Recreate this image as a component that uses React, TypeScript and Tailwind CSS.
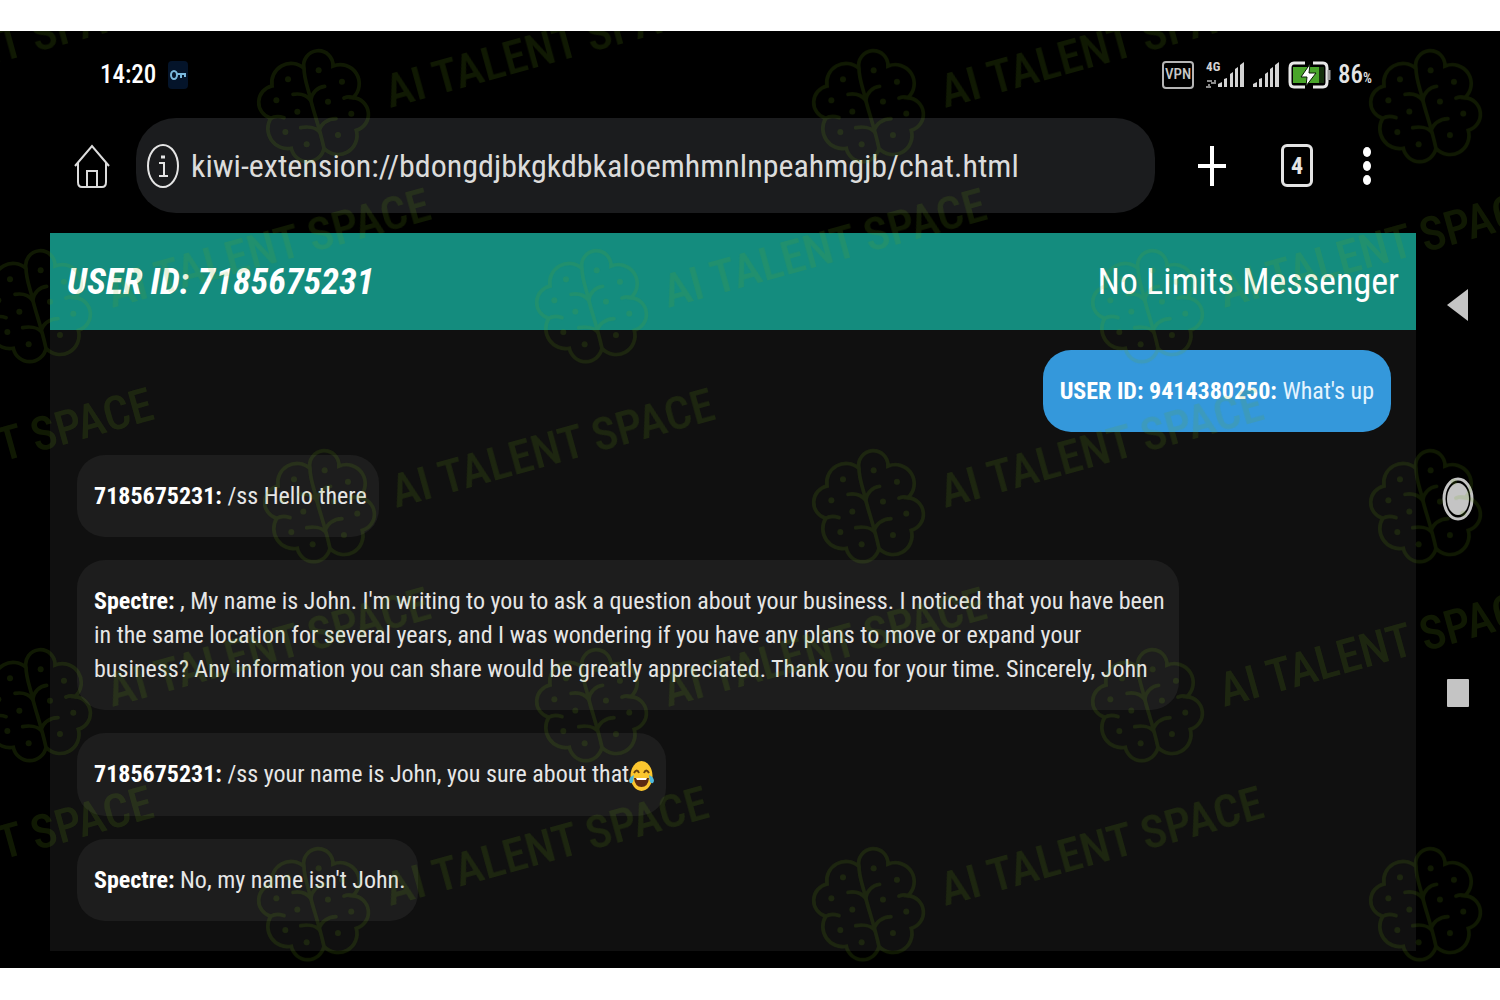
import React from 'react';

type Message = {
  id: number;
  author: string;
  text: string;
  own?: boolean;
  laughing?: boolean;
};

const messages: Message[] = [
  { id: 1, author: 'USER ID: 9414380250:', text: "What's up", own: true },
  { id: 2, author: '7185675231:', text: '/ss Hello there' },
  {
    id: 3,
    author: 'Spectre:',
    text: ", My name is John. I'm writing to you to ask a question about your business. I noticed that you have been in the same location for several years, and I was wondering if you have any plans to move or expand your business? Any information you can share would be greatly appreciated. Thank you for your time. Sincerely, John",
  },
  {
    id: 4,
    author: '7185675231:',
    text: '/ss your name is John, you sure about that',
    laughing: true,
  },
  { id: 5, author: 'Spectre:', text: "No, my name isn't John." },
];

// Centres of the repeated brand marks
const marks = [
  [-242, 76], [313, 76], [868, 76], [1425, 76],
  [35, 276], [591, 276], [1147, 276],
  [-242, 476], [319, 476], [868, 476], [1425, 476],
  [35, 675], [591, 675], [1147, 675],
  [-242, 874], [313, 874], [868, 874], [1425, 874],
];

const dots = [
  [130, 145], [222, 118], [292, 152], [95, 208], [250, 212],
  [158, 242], [320, 248], [122, 303], [280, 312], [186, 340],
];

const Watermark = () => (
  <svg
    className="pointer-events-none absolute inset-0 h-full w-full overflow-hidden"
    aria-hidden="true"
  >
    <defs>
      <g id="brain" fill="none" stroke="#6eaa14" strokeWidth="11" strokeLinecap="round">
        <path d="M178 112A58 58 0 0 0 82 165A50 50 0 0 0 78 262A60 60 0 0 0 140 352A50 50 0 0 0 238 352A57 57 0 0 0 335 298A50 50 0 0 0 325 200A57 57 0 0 0 265 105A44 44 0 1 0 178 112C178 145 190 170 198 205C207 245 222 280 238 352" />
        <path d="M145 190C165 187 185 190 198 208C202 185 218 168 240 166M168 290C190 286 212 290 222 300C230 280 248 264 274 263M78 262C88 256 103 255 118 260M298 201C308 197 318 197 325 200" />
        {dots.map(([x, y]) => (
          <circle key={`${x}-${y}`} cx={x} cy={y} r="9" fill="#6eaa14" stroke="none" />
        ))}
      </g>
    </defs>
    <g opacity="0.15">
      {marks.map(([x, y]) => (
        <g key={`${x}-${y}`} transform={`translate(${x} ${y})`}>
          <use href="#brain" transform="scale(0.333) translate(-205 -228)" />
          <text
            transform="translate(77 1) rotate(-15.5)"
            fill="#6eaa14"
            className="font-['Roboto_Condensed',Roboto,sans-serif] text-[47px] font-medium"
          >
            AI TALENT SPACE
          </text>
        </g>
      ))}
    </g>
  </svg>
);

const Signal = () => (
  <svg width="27" height="26" viewBox="0 0 27 26" fill="#d4d4d4" aria-hidden="true">
    <path d="M0 25V22L4 20V25ZM6 25V17L9 16V25ZM12 25V12L15 10V25ZM17 25V7L20 5V25ZM22 25V3L26 0V25Z" />
  </svg>
);

const StatusBar = () => (
  <div className="flex h-[87px] items-center pr-11 pl-[50px] text-white">
    <time className="text-[25px] font-medium">14:20</time>
    <span className="ml-3 flex h-7 w-5 items-center justify-center rounded bg-[#04142a]">
      <svg width="16" height="12" viewBox="0 0 16 12" fill="none" stroke="#7ab8dc" aria-hidden="true">
        <ellipse cx="4" cy="6" rx="3" ry="4" strokeWidth="2" />
        <path d="M7 5H15V8M11 5V9" strokeWidth="2" />
      </svg>
    </span>
    <div className="ml-auto flex items-center">
      <span className="flex h-7 w-8 items-center justify-center rounded-sm border-2 border-[#b5b5b5] text-[15px] font-medium text-[#c8c8c8]">
        VPN
      </span>
      <span className="ml-3 flex h-7 w-4 flex-col justify-between text-[13px] leading-3 font-bold text-[#d4d4d4]">
        4G
        <svg width="10" height="10" viewBox="0 0 10 10" fill="none" stroke="#8a8a8a" strokeWidth="2" aria-hidden="true">
          <path d="M1 2H6M0 8H5M5 4H9V1M3 8V5" />
        </svg>
      </span>
      <span className="-ml-1">
        <Signal />
      </span>
      <span className="ml-2">
        <Signal />
      </span>
      <svg className="ml-2" width="46" height="28" viewBox="0 0 46 28" fill="none" aria-label="Charging" role="img">
        <path d="M17 2H6Q2 2 2 7V21Q2 26 6 26H17M25 2H35Q39 2 39 7V21Q39 26 35 26H25" stroke="#e8e8e8" strokeWidth="3" />
        <path d="M5 6H31V22H5Z" fill="#49a52a" />
        <path d="M31 6H36V22H31Z" fill="#14300c" />
        <path d="M41 9V19" stroke="#9a9a9a" strokeWidth="3" />
        <path d="M22 3L13 16H19L18 25L28 12H21Z" fill="#fff" stroke="#0a1a06" strokeWidth="1" />
      </svg>
      <span className="ml-1 text-[25px] font-medium text-[#e4e4e4]">
        86<span className="text-[14px]">%</span>
      </span>
    </div>
  </div>
);

const Toolbar = () => (
  <div className="flex h-[95px] items-center pl-6">
    <button type="button" aria-label="Home">
      <svg width="36" height="46" viewBox="0 0 36 46" fill="none" stroke="#dcdcdc" strokeWidth="2">
        <path d="M1 23L18 3L35 23M4 20V39Q4 44 8 44H28Q32 44 32 39V20M13 43V28H23V43" />
      </svg>
    </button>
    <div className="ml-[26px] flex h-full flex-1 items-center rounded-[40px] bg-[#1b1c1e] pl-[10px]">
      <svg width="34" height="46" viewBox="0 0 34 46" fill="none" stroke="#e4e4e4" aria-hidden="true">
        <ellipse cx="17" cy="23" rx="15" ry="21" strokeWidth="2" />
        <path d="M13 20H18V32M13 33H22" strokeWidth="2" />
        <path d="M15 14H19" strokeWidth="3" />
      </svg>
      <input
        type="text"
        aria-label="Address"
        defaultValue="kiwi-extension://bdongdjbkgkdbkaloemhmnlnpeahmgjb/chat.html"
        className="ml-[11px] h-12 min-w-0 flex-1 bg-transparent text-[32px] text-[#dcdcdc] outline-none"
      />
    </div>
    <div className="flex w-[261px] items-center pl-[43px]">
      <button type="button" aria-label="New tab">
        <svg width="28" height="40" viewBox="0 0 28 40" stroke="#fff" strokeWidth="4">
          <path d="M14 0V40M0 20H28" />
        </svg>
      </button>
      <button
        type="button"
        aria-label="Open tabs"
        className="ml-[55px] flex h-[43px] w-8 items-center justify-center rounded-md border-3 border-[#e4e4e4] text-[24px] font-bold text-[#e4e4e4]"
      >
        4
      </button>
      <button type="button" aria-label="Menu" className="ml-[49px]">
        <svg width="10" height="40" viewBox="0 0 10 40" fill="#fff">
          <ellipse cx="5" cy="6" rx="4" ry="5" />
          <ellipse cx="5" cy="20" rx="4" ry="5" />
          <ellipse cx="5" cy="34" rx="4" ry="5" />
        </svg>
      </button>
    </div>
  </div>
);

const LaughingFace = () => (
  <svg
    className="inline-block align-middle"
    width="25"
    height="32"
    viewBox="0 0 25 32"
    role="img"
    aria-label="Face with tears of joy"
  >
    <ellipse cx="12.5" cy="16" rx="11" ry="15" fill="#fbc62f" />
    <path d="M5 13Q8 8 10 13M15 13Q17 8 20 13" fill="none" stroke="#6b4410" strokeWidth="2" />
    <path d="M5 18H20Q19 27 12.5 27Q6 27 5 18Z" fill="#5c2a12" />
    <path d="M7 18H18L17 20H8Z" fill="#fff" />
    <path d="M5 15Q0 17 0 21Q1 25 4 22ZM20 15Q25 17 25 21Q24 25 21 22Z" fill="#4fb9dc" />
  </svg>
);

const Bubble = ({ message }: { message: Message }) => (
  <li
    className={
      message.own
        ? 'self-end rounded-[28px] bg-[#3498db] px-[17px] py-6 text-[#e4f4ff]'
        : 'max-w-[1102px] self-start rounded-[28px] bg-[#1d1d1d] py-6 pr-3 pl-[17px] text-[#e6e6e6]'
    }
  >
    <p className="text-[24px] leading-[34px]">
      <strong className="font-bold text-white">{message.author}</strong> {message.text}
      {message.laughing && <LaughingFace />}
    </p>
  </li>
);

const SystemNav = () => (
  <nav aria-label="System" className="flex w-[84px] shrink-0 flex-col items-center justify-center gap-[146px]">
    <button type="button" aria-label="Back" className="flex h-12 items-center">
      <svg width="22" height="32" viewBox="0 0 22 32" fill="#c4c4c4">
        <path d="M21 0V32L0 16Z" />
      </svg>
    </button>
    <button type="button" aria-label="Home screen" className="flex h-12 items-center">
      <svg width="32" height="44" viewBox="0 0 32 44" fill="none">
        <ellipse cx="16" cy="22" rx="14" ry="20" stroke="#c4c4c4" strokeWidth="3" />
        <ellipse cx="16" cy="22" rx="11" ry="16" fill="#c4c4c4" />
      </svg>
    </button>
    <button type="button" aria-label="Recent apps" className="flex h-12 items-center">
      <svg width="22" height="28" viewBox="0 0 22 28" fill="#c4c4c4">
        <rect width="22" height="28" rx="1" />
      </svg>
    </button>
  </nav>
);

export default function App() {
  return (
    <div className="min-h-screen bg-white py-[31px] font-['Roboto_Condensed',Roboto,sans-serif]">
      <div className="relative flex overflow-hidden bg-black">
        <div className="min-w-0 flex-1 pb-[17px] pl-[50px]">
          <StatusBar />
          <Toolbar />
          <main className="mt-5 bg-[#101010]">
            <header className="flex h-[97px] items-center justify-between bg-[#148c7e] px-[17px] text-white">
              <h2 className="text-[36px] font-bold italic">USER ID: 7185675231</h2>
              <h1 className="text-[36px]">No Limits Messenger</h1>
            </header>
            <ul className="flex flex-col gap-[23px] pt-5 pr-[25px] pb-[30px] pl-[27px]">
              {messages.map((message) => (
                <Bubble key={message.id} message={message} />
              ))}
            </ul>
          </main>
        </div>
        <SystemNav />
        <Watermark />
      </div>
    </div>
  );
}
